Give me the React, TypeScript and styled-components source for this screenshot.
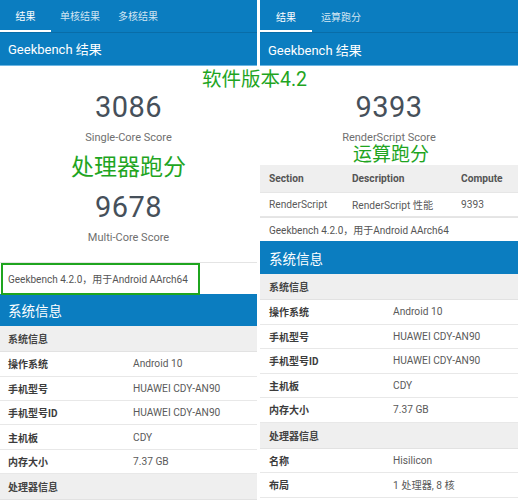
import React from 'react'
import styled, { createGlobalStyle } from 'styled-components'

const BLUE = '#0b7dc0'
const GREEN = '#1fa51f'
const LATIN = `Roboto, 'Noto Sans CJK SC', sans-serif`

const GlobalStyle = createGlobalStyle`
  html, body {
    margin: 0;
    padding: 0;
    background: #ffffff;
  }
  body {
    font-family: ${LATIN};
  }
`

const Page = styled.div`
  position: relative;
  display: flex;
  gap: 3px;
  width: 518px;
  height: 500px;
  overflow: hidden;
  background: #ffffff;
`

const Panel = styled.div<{ width: number }>`
  display: flex;
  flex-direction: column;
  width: ${({ width }) => width}px;
  flex-shrink: 0;
`

const TabBar = styled.div`
  display: flex;
  height: 32px;
  background: ${BLUE};
  border-bottom: 1px solid rgba(0, 0, 0, 0.12);
`

const Tab = styled.div<{ active?: boolean; width: number }>`
  display: flex;
  align-items: center;
  justify-content: center;
  width: ${({ width }) => width}px;
  font-size: 10px;
  color: ${({ active }) => (active ? '#ffffff' : 'rgba(255,255,255,0.82)')};
  box-sizing: border-box;
  border-bottom: 2px solid ${({ active }) => (active ? '#ffffff' : 'transparent')};
  padding-top: 2px;
`

const TitleBar = styled.div`
  display: flex;
  align-items: center;
  height: 32px;
  padding-left: 8px;
  background: ${BLUE};
  color: #ffffff;
  font-size: 13px;
  border-bottom: 1px solid #6db6e3;
`

const ScoreArea = styled.div<{ height: number }>`
  display: flex;
  flex-direction: column;
  align-items: center;
  height: ${({ height }) => height}px;
  box-sizing: border-box;
  padding-top: 22px;
`

const ScoreValue = styled.div`
  font-size: 29px;
  color: #46505a;
  line-height: 38px;
  letter-spacing: 0.5px;
`

const ScoreLabel = styled.div<{ gapAfter?: number }>`
  font-size: 11px;
  color: #6f6f6f;
  line-height: 16px;
  margin-top: 4px;
  margin-bottom: ${({ gapAfter }) => gapAfter ?? 0}px;
`

const FooterRow = styled.div<{ height: number; padLeft: number }>`
  display: flex;
  align-items: center;
  height: ${({ height }) => height}px;
  padding-left: ${({ padLeft }) => padLeft}px;
  font-size: 10px;
  color: #555;
  border-top: 1px solid #e4e4e4;
  box-sizing: border-box;
  white-space: nowrap;
`

const SectionHeader = styled.div<{ padLeft: number }>`
  display: flex;
  align-items: center;
  height: 33px;
  padding-left: ${({ padLeft }) => padLeft}px;
  background: ${BLUE};
  color: #ffffff;
  font-size: 13.5px;
`

const GroupRow = styled.div<{ padLeft: number }>`
  display: flex;
  align-items: center;
  height: 26px;
  padding-left: ${({ padLeft }) => padLeft}px;
  background: #efefef;
  color: #444;
  font-size: 10px;
  font-weight: 700;
  border-bottom: 1px solid #e2e2e2;
  box-sizing: border-box;
`

const InfoRow = styled.div<{ padLeft: number }>`
  display: grid;
  grid-template-columns: ${({ padLeft }) => 133 - padLeft}px 1fr;
  align-items: center;
  height: 24.5px;
  padding-left: ${({ padLeft }) => padLeft}px;
  border-bottom: 1.5px solid #e8e8e8;
  box-sizing: border-box;
`

const InfoLabel = styled.span`
  font-size: 10px;
  font-weight: 700;
  color: #3c3c3c;
`

const InfoValue = styled.span`
  font-size: 10.2px;
  color: #5a5a5a;
`

const Table = styled.div`
  display: flex;
  flex-direction: column;
`

const TableRow = styled.div<{ head?: boolean }>`
  display: grid;
  grid-template-columns: 83px 109px 1fr;
  align-items: center;
  height: ${({ head }) => (head ? 28 : 24)}px;
  padding-left: 9px;
  background: ${({ head }) => (head ? '#efefef' : '#ffffff')};
  font-size: 10.2px;
  font-weight: ${({ head }) => (head ? 700 : 400)};
  color: ${({ head }) => (head ? '#555' : '#5a5a5a')};
  border-bottom: 1px solid #e6e6e6;
  box-sizing: border-box;
`

const Note = styled.div<{ x: number; y: number; size: number }>`
  position: absolute;
  left: ${({ x }) => x}px;
  top: ${({ y }) => y}px;
  font-size: ${({ size }) => size}px;
  line-height: 1;
  color: ${GREEN};
  font-family: ${LATIN};
  white-space: nowrap;
`

const NoteBox = styled.div`
  position: absolute;
  left: 1px;
  top: 263px;
  width: 199px;
  height: 32px;
  border: 2px solid ${GREEN};
  box-sizing: border-box;
`

type Info = [string, string]

const systemInfo: Info[] = [
  ['操作系统', 'Android 10'],
  ['手机型号', 'HUAWEI CDY-AN90'],
  ['手机型号ID', 'HUAWEI CDY-AN90'],
  ['主机板', 'CDY'],
  ['内存大小', '7.37 GB']
]

const cpuInfo: Info[] = [
  ['名称', 'Hisilicon'],
  ['布局', '1 处理器, 8 核']
]

const FOOTER = 'Geekbench 4.2.0，用于Android AArch64'

const InfoRows = ({ rows, padLeft }: { rows: Info[]; padLeft: number }) => (
  <>
    {rows.map(([label, value]) => (
      <InfoRow key={label} padLeft={padLeft}>
        <InfoLabel>{label}</InfoLabel>
        <InfoValue>{value}</InfoValue>
      </InfoRow>
    ))}
  </>
)

const App = () => {
  return (
    <>
      <GlobalStyle />
      <Page>
        <Panel width={257}>
          <TabBar>
            <Tab active width={51}>结果</Tab>
            <Tab width={58}>单核结果</Tab>
            <Tab width={58}>多核结果</Tab>
          </TabBar>
          <TitleBar>Geekbench 结果</TitleBar>
          <ScoreArea height={197}>
            <ScoreValue>3086</ScoreValue>
            <ScoreLabel gapAfter={42}>Single-Core Score</ScoreLabel>
            <ScoreValue>9678</ScoreValue>
            <ScoreLabel>Multi-Core Score</ScoreLabel>
          </ScoreArea>
          <FooterRow height={32} padLeft={8}>{FOOTER}</FooterRow>
          <SectionHeader padLeft={8}>系统信息</SectionHeader>
          <GroupRow padLeft={8}>系统信息</GroupRow>
          <InfoRows rows={systemInfo} padLeft={8} />
          <GroupRow padLeft={8}>处理器信息</GroupRow>
        </Panel>
        <Panel width={258}>
          <TabBar>
            <Tab active width={52}>结果</Tab>
            <Tab width={58}>运算跑分</Tab>
          </TabBar>
          <TitleBar>Geekbench 结果</TitleBar>
          <ScoreArea height={99}>
            <ScoreValue>9393</ScoreValue>
            <ScoreLabel>RenderScript Score</ScoreLabel>
          </ScoreArea>
          <Table>
            <TableRow head>
              <span>Section</span>
              <span>Description</span>
              <span>Compute</span>
            </TableRow>
            <TableRow>
              <span>RenderScript</span>
              <span>RenderScript 性能</span>
              <span>9393</span>
            </TableRow>
          </Table>
          <FooterRow height={24} padLeft={9}>{FOOTER}</FooterRow>
          <SectionHeader padLeft={9}>系统信息</SectionHeader>
          <GroupRow padLeft={9}>系统信息</GroupRow>
          <InfoRows rows={systemInfo} padLeft={9} />
          <GroupRow padLeft={9}>处理器信息</GroupRow>
          <InfoRows rows={cpuInfo} padLeft={9} />
        </Panel>
        <Note x={202} y={70} size={19.5}>软件版本4.2</Note>
        <Note x={71} y={156} size={23}>处理器跑分</Note>
        <Note x={353} y={145} size={19}>运算跑分</Note>
        <NoteBox />
      </Page>
    </>
  )
}

export default App
